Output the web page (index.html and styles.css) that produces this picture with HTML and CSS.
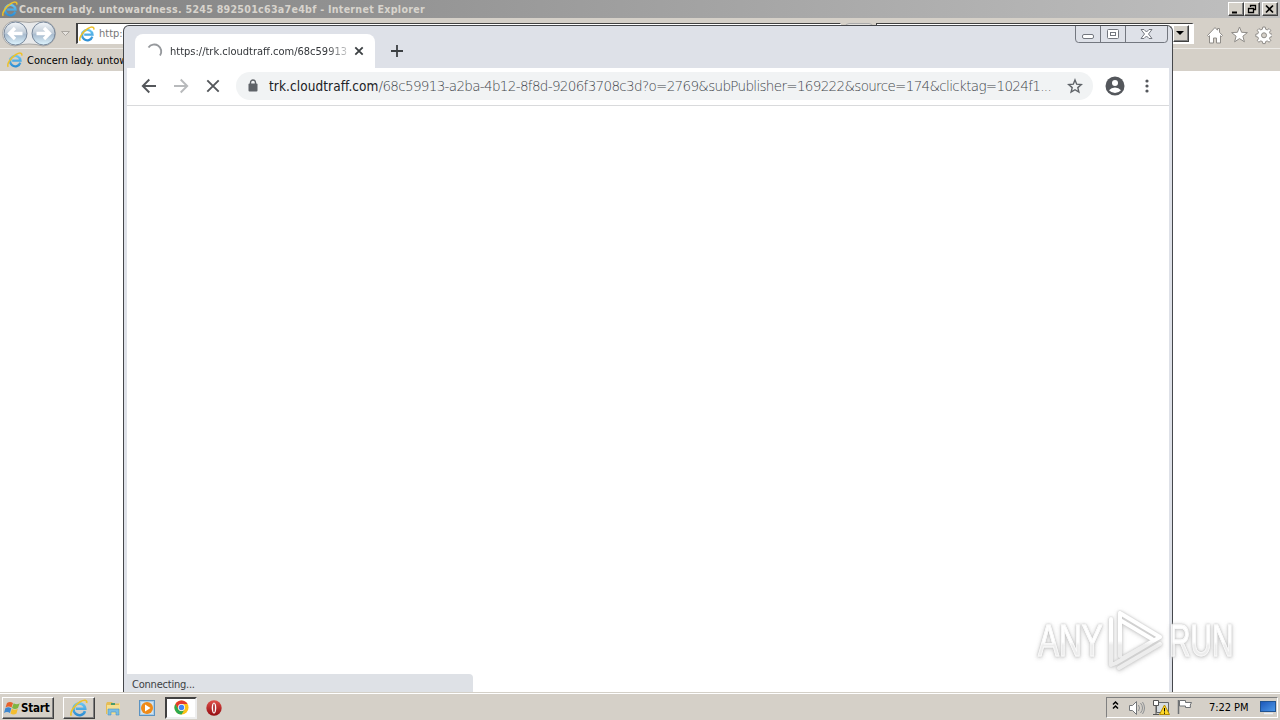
FILE: index.html
```html
<!DOCTYPE html>
<html lang="en">
<head>
<meta charset="utf-8">
<title>Desktop</title>
<link rel="stylesheet" href="styles.css">
</head>
<body>
<svg class="defs" width="0" height="0" aria-hidden="true">
  <defs>
    <linearGradient id="blue" x1="0" y1="0" x2="0" y2="1"><stop offset="0" stop-color="#67c4f2"/><stop offset="1" stop-color="#2f8fd4"/></linearGradient>
    <linearGradient id="orb" x1="0" y1="0" x2="0" y2="1"><stop offset="0" stop-color="#f4f7fa"/><stop offset=".45" stop-color="#c3ced9"/><stop offset=".55" stop-color="#a9bccf"/><stop offset="1" stop-color="#dff5ff"/></linearGradient>
    <linearGradient id="screen" x1="0" y1="0" x2="1" y2="1"><stop offset="0" stop-color="#1b55b8"/><stop offset="1" stop-color="#4f9bea"/></linearGradient>
    <linearGradient id="red" x1="0" y1="0" x2="0" y2="1"><stop offset="0" stop-color="#e0504a"/><stop offset="1" stop-color="#930b10"/></linearGradient>
    <linearGradient id="mark" gradientUnits="userSpaceOnUse" x1="0" y1="0" x2="0" y2="66"><stop offset=".5" stop-color="#fff"/><stop offset=".56" stop-color="#ececec"/></linearGradient>
    <symbol id="ie" viewBox="0 0 16 16">
      <path d="M13.300 10.700A5.200 5.200 0 1 1 13.500 8.600H5.200" fill="none" stroke="url(#blue)" stroke-width="2.300"/>
      <path d="M1.200 14.800C-.6 12 4 5.500 9 2.500C12.500.4 15.600.6 14.700 3.600" fill="none" stroke="#edc12b" stroke-width="1.500"/>
    </symbol>
  </defs>
</svg>
<div class="desktop">
  <section class="ie">
    <header class="ie-title">
      <svg class="ic16" viewBox="0 0 16 16"><use href="#ie"/></svg>
      <span class="ie-caption">Concern lady. untowardness. 5245 892501c63a7e4bf - Internet Explorer</span>
      <div class="ie-controls">
        <span class="btn"><svg width="14" height="12"><path d="M3 9.500h5" stroke="#000" stroke-width="2"/></svg></span>
        <span class="btn"><svg width="14" height="12"><path d="M5.500 4V2.500h5v4H9M5 2.500h6M3.500 5.500h5v4h-5zM3 5.500h6" fill="none" stroke="#000" stroke-width="1.300"/></svg></span>
        <span class="btn last"><svg width="14" height="12"><path d="M3 2.500l7 7M10 2.500l-7 7" stroke="#000" stroke-width="1.700"/></svg></span>
      </div>
    </header>
    <div class="ie-nav">
      <svg class="orbs" width="72" height="28" viewBox="0 0 72 28">
        <path d="M15 2Q29 5 43 2A12.500 12.500 0 0 1 43 27Q29 23 15 27A12.500 12.500 0 0 1 15 2Z" fill="#e8e9ea" stroke="#aaa9a7"/>
        <circle cx="15.500" cy="14.500" r="11.500" fill="url(#orb)" stroke="#77879a"/>
        <circle cx="43.500" cy="14.500" r="11.500" fill="url(#orb)" stroke="#77879a"/>
        <path d="M22.500 14.500H9.500M15 9l-5.500 5.500 5.500 5.500M36.500 14.500h13M44 9l5.500 5.500-5.500 5.500" fill="none" stroke="#fff" stroke-width="3.300"/>
        <path d="M61.500 12.500h8l-4 4z" fill="#e6e3df" stroke="#aaa6a0"/>
      </svg>
      <div class="ie-address"><svg class="ic16" viewBox="0 0 16 16"><use href="#ie"/></svg><span>http:</span></div>
      <span class="gap-chip"></span>
      <div class="ie-search"><span class="drop"><svg width="14" height="15"><path d="M2 5h8l-4 4z"/></svg></span></div>
      <svg class="ie-tools" width="66" height="20" viewBox="0 0 66 20" fill="#fff" stroke="#8f8c88" stroke-width="1">
        <path d="M1.500 10.500L9 2.500l2.500 2.700V3.500h2v3.800l3 3.200-1 1-1-.8V18h-4v-5h-3v5h-4v-7.300l-1 .8z"/>
        <path d="M33.500 2l2.100 5.300 5.800.3-4.500 3.600 1.500 5.600-4.900-3.200-4.900 3.200 1.500-5.600-4.500-3.600 5.800-.3z"/>
        <path d="M56.800 2h2.400l.4 2.200 1.600.7 1.900-1.300 1.700 1.700-1.300 1.900.7 1.600 2 .4v2.400l-2 .4-.7 1.600 1.300 1.900-1.700 1.700-1.900-1.300-1.600.7-.4 2h-2.400l-.4-2-1.600-.7-1.900 1.300-1.700-1.700 1.300-1.900-.7-1.600-2-.4V9.200l2-.4.7-1.600-1.300-1.900 1.700-1.700 1.900 1.300 1.600-.7z"/>
        <circle cx="58" cy="10.300" r="2.500" fill="#d5d0c8"/>
      </svg>
    </div>
    <div class="ie-tabs"><svg class="ic16" viewBox="0 0 16 16"><use href="#ie"/></svg><span>Concern lady. untowardness</span></div>
  </section>

  <section class="chrome">
    <div class="caption-buttons">
      <svg width="93" height="17" viewBox="0 0 93 17" fill="none" stroke="#73777f">
        <path d="M.5 0v13q0 3.500 3 3.500h86q3 0 3-3.500V0M25.500 0v16M50.500 0v16"/>
        <rect x="7.500" y="8.500" width="11" height="4" rx="1.500" fill="#fff"/>
        <rect x="32.500" y="3.500" width="11" height="9" rx="1" fill="#fff"/><rect x="35.500" y="6.500" width="5" height="3"/>
        <path d="M66 3.500h3l2.500 2.500L74 3.500h3L73.500 8l3.500 4.500h-3L71.500 10 69 12.500h-3L69.500 8z" fill="#fff"/>
      </svg>
    </div>
    <div class="tabstrip">
      <div class="tab">
        <svg class="spinner" width="16" height="16" viewBox="0 0 16 16"><path d="M1.500 4.500A6.900 6.900 0 0 1 13 12.500" fill="none" stroke="#96999d" stroke-width="1.900"/></svg>
        <span class="tab-title">https://trk.cloudtraff.com/68c59913</span>
        <svg class="tab-close" width="10" height="10" viewBox="0 0 10 10"><path d="M1.300 1.300l7.400 7.400M8.700 1.300L1.300 8.700" stroke="#3c4043" stroke-width="1.800"/></svg>
      </div>
      <svg class="plus" width="14" height="14" viewBox="0 0 14 14"><path d="M7 1v12M1 7h12" stroke="#3c4043" stroke-width="1.800"/></svg>
    </div>
    <div class="toolbar">
      <svg class="nav" width="92" height="18" viewBox="0 0 92 18" fill="none" stroke-width="1.900">
        <path d="M15 9H2M8.300 2.500L1.800 9l6.500 6.500" stroke="#54575b"/>
        <path d="M33 9h13M39.700 2.500L46.200 9l-6.500 6.500" stroke="#b8babc"/>
        <path d="M66.300 3.300l11.400 11.400M77.700 3.300L66.300 14.700" stroke="#54575b"/>
      </svg>
      <div class="omnibox">
        <svg class="lock" width="10" height="13" viewBox="0 0 10 13"><path d="M2.500 5V3.500a2.500 2.500 0 0 1 5 0V5" fill="none" stroke="#5f6368" stroke-width="1.400"/><rect x=".5" y="4.500" width="9" height="8" rx="1" fill="#5f6368"/></svg>
        <span class="url"><span class="host">trk.cloudtraff.com</span><span class="path">/68c59913-a2ba-4b12-8f8d-9206f3708c3d?o=2769&amp;subPublisher=169222&amp;source=174&amp;clicktag=1024f1...</span></span>
        <svg class="star" width="16" height="16" viewBox="0 0 16 16"><path d="M8 1.900l1.700 4.300 4.600.4-3.500 3 1.100 4.500L8 11.700l-3.900 2.400 1.100-4.500-3.500-3 4.600-.4z" fill="none" stroke="#5f6368" stroke-width="1.400"/></svg>
      </div>
      <svg class="avatar" width="20" height="20" viewBox="0 0 20 20"><circle cx="10" cy="10" r="9.500" fill="#54575c"/><circle cx="10" cy="7" r="3" fill="#fff"/><path d="M4 14.300q2.300-2.800 6-2.800t6 2.800q-2.300 2.700-6 2.700t-6-2.700z" fill="#fff"/></svg>
      <svg class="dots" width="4" height="14" viewBox="0 0 4 14" fill="#54575c"><circle cx="2" cy="2" r="1.600"/><circle cx="2" cy="7" r="1.600"/><circle cx="2" cy="12" r="1.600"/></svg>
    </div>
    <main class="page"><div class="status">Connecting...</div></main>
  </section>

  <div class="watermark">
    <span class="any">ANY</span>
    <svg width="60" height="66" viewBox="0 0 60 66" fill="none" stroke="url(#mark)" stroke-width="4" stroke-linejoin="round" stroke-linecap="round">
      <path d="M15 5v43M15 5L55 29 18 50M15 12L47 31M6 11v46l5-2M14 60l41-24M11 55l34-20"/>
    </svg>
    <span class="run">RUN</span>
  </div>

  <footer class="taskbar">
    <div class="start"><svg width="17" height="16" viewBox="0 0 17 16"><path d="M3 3q3-2 6 0L7.500 7.500q-3-2-6 0z" fill="#e7622c"/><path d="M9.700 3.300q3 2 6 0L14 8q-3 2-6 0z" fill="#7fb541"/><path d="M1.300 8.300q3-2 6 0L6 13q-3-2-6 0z" fill="#3d87d0"/><path d="M7.800 8.800q3 2 6 0L12.500 13.500q-3 2-6 0z" fill="#f4bd2f"/></svg><span>Start</span></div>
    <div class="task raised"><svg class="ic18" viewBox="0 0 16 16"><use href="#ie"/></svg></div>
    <div class="task"><svg width="18" height="18" viewBox="0 0 18 18"><path d="M2 5l1-2h5l1 1.500h6V15H2z" fill="#e5bd57"/><path d="M3 6h12V4l1-.5V15H3z" fill="#f5df91"/><path d="M7 4h4v2H7z" fill="#4a9a6c"/><path d="M4 16v-6h11v6h-3v-3H7v3z" fill="#79bde4" stroke="#4f94bf" stroke-width=".6"/></svg></div>
    <div class="task"><svg width="16" height="16" viewBox="0 0 16 16"><rect x=".5" y=".5" width="15" height="15" fill="#a9cbe5" stroke="#5b93c2"/><rect x="2" y="2" width="12" height="12" fill="#cfe3f1"/><circle cx="8" cy="8" r="6" fill="#ef8a17"/><path d="M6 4.500L11.500 8 6 11.500z" fill="#fff"/></svg></div>
    <div class="task pressed"><svg width="15" height="15" viewBox="0 0 16 16"><circle cx="8" cy="8" r="7.500" fill="#fbc116"/><path d="M1.500 4.250A7.500 7.500 0 0 1 14.500 4.250H8A3.800 3.800 0 0 0 4.700 10z" fill="#e33b2e"/><path d="M1.500 4.250A7.500 7.500 0 0 0 8 15.500L11.300 10A3.800 3.800 0 0 1 4.700 10z" fill="#2da94f"/><circle cx="8" cy="8" r="3.700" fill="#fff"/><circle cx="8" cy="8" r="2.900" fill="#4285f4"/></svg></div>
    <div class="task opera"><svg width="16" height="16" viewBox="0 0 16 16"><circle cx="8" cy="8" r="7.700" fill="url(#red)"/><ellipse cx="8" cy="8" rx="2.300" ry="5.600" fill="#fff"/><ellipse cx="8" cy="8" rx=".8" ry="4.600" fill="#a51218"/></svg></div>
    <div class="tray">
      <svg width="82" height="18" viewBox="0 0 82 18" fill="none">
        <path d="M2 5.500l2.500-2.500 2.500 2.500M2 9.500l2.500-2.500 2.500 2.500" stroke="#000" stroke-width="1.500"/>
        <path d="M18.500 6.500h3l4-4v13l-4-4h-3z" fill="#fff" stroke="#74777a"/>
        <path d="M27.500 6q2 3 0 6M29.500 4q4 5 0 10M31.500 3q4 6 0 12" stroke="#8e9194"/>
        <path d="M45.500 3.500h12v10h-12z" fill="#d7dde1" stroke="#63676a"/><path d="M42.500 1.500h5v5h-5zM45 7v8M42 15.500h6" fill="#fff" stroke="#555"/>
        <path d="M53.500 6l5 9.500h-10z" fill="#ffd928" stroke="#b48a00"/><path d="M53.500 9v3.500M53.500 13.500v1.300" stroke="#000"/>
        <path d="M67.500 1v14" stroke="#6f7275" stroke-width="1.500"/><path d="M68.500 1.500h6v2h6q-2 2.500-1 5h-5v-1.500h-6z" fill="#fff" stroke="#6f7275"/>
      </svg>
      <span class="clock">7:22 PM</span>
      <svg class="monitor" width="16" height="15" viewBox="0 0 16 15"><rect x=".5" y="1.500" width="15" height="10" fill="url(#screen)" stroke="#215391"/><path d="M4 13.500h9" stroke="#e9eff6" stroke-width="1.500"/></svg>
    </div>
  </footer>
</div>
</body>
</html>
```

FILE: styles.css
```css
* { box-sizing: border-box; }
body { margin: 0; width: 1280px; height: 720px; overflow: hidden; background: #fff; }
svg { display: block; flex: none; }
.defs { position: absolute; }
.desktop { position: relative; width: 1280px; height: 720px; overflow: hidden; font: 10.6px "DejaVu Sans Condensed", "DejaVu Sans", sans-serif; font-stretch: condensed; color: #000; white-space: nowrap; }
.ic16 { width: 16px; height: 16px; }
.ic18 { width: 18px; height: 18px; }

.ie { position: absolute; inset: 0 0 28px 0; background: #fff; display: flex; flex-direction: column; }
.ie-title { height: 18px; display: flex; align-items: center; padding: 0 2px; background: linear-gradient(90deg, #808080, #c0c0c0); color: #d8d4cd; font-weight: bold; }
.ie-caption { margin-left: 1px; letter-spacing: .27px; }
.ie-controls { margin-left: auto; display: flex; }
.btn { width: 16px; height: 14px; background: #d4d0c8; border: 1px solid; border-color: #fff #404040 #404040 #fff; box-shadow: inset -1px -1px #808080; }
.btn.last { margin-left: 2px; }
.ie-nav { height: 30px; background: #d5d0c8; display: flex; align-items: flex-start; padding-top: 1px; }
.ie-address { margin: 4px 0 0 4px; width: 765px; height: 21px; background: #fff; border: 1px solid #404040; border-left-width: 2px; border-right-color: #fff; border-bottom-color: #fff; display: flex; align-items: center; padding-left: 1px; gap: 4px; color: #777; font-size: 11px; }
.gap-chip { width: 28px; height: 18px; margin: 4px 3px 0 4px; background: #e3e1dd; border: 1px solid #aaa; border-radius: 4px; }
.ie-search { width: 318px; height: 21px; margin-top: 4px; background: #fff; border: 1px solid #404040; border-right: 2px solid #fff; border-bottom-color: #fff; display: flex; justify-content: flex-end; padding: 1px 3px 0 0; }
.drop { width: 16px; height: 17px; background: #d4d0c8; border: 1px solid; border-color: #fff #404040 #404040 #fff; box-shadow: inset -1px -1px #808080; }
.ie-tools { margin: 6px 0 0 12px; }
.ie-tabs { height: 23px; background: #d5d0c8; border-top: 1px solid #eceae6; display: flex; align-items: center; padding-left: 7px; gap: 4px; font-size: 11px; }

.chrome { position: absolute; left: 123px; top: 25px; width: 1050px; height: 667px; background: #dee1e8; border: solid #45474b; border-width: 1px 1px 0 1px; border-radius: 6px 6px 0 0; padding: 0 3px; display: flex; flex-direction: column; }
.caption-buttons { position: absolute; right: 4px; top: 0; }
.tabstrip { height: 42px; display: flex; align-items: flex-start; padding: 8px 0 0 8px; }
.tab { width: 240px; height: 34px; background: #fff; border-radius: 8px 8px 0 0; display: flex; align-items: center; padding-left: 12px; }
.tab-title { width: 177px; margin-left: 7px; overflow: hidden; font-size: 11px; letter-spacing: 0; color: #33363a; -webkit-mask-image: linear-gradient(90deg, #000 88%, transparent 104%); mask-image: linear-gradient(90deg, #000 88%, transparent 104%); }
.tab-close { margin-left: 7px; }
.plus { margin: 10px 0 0 15px; }
.toolbar { height: 38px; background: #fff; border-bottom: 1px solid #d9dadc; display: flex; align-items: center; padding: 0 0 2px 14px; }
.omnibox { width: 857px; height: 28px; margin-left: 3px; background: #f1f3f4; border-radius: 14px; display: flex; align-items: center; padding: 0 10px 0 12px; }
.url { margin-left: 11px; width: 786px; font-size: 13.500px; font-weight: 200; font-family: "DejaVu Sans Light", "DejaVu Sans", sans-serif; font-stretch: normal; letter-spacing: -.67px; color: #42464b; }
.host { color: #202124; font-family: "DejaVu Sans Condensed", "DejaVu Sans", sans-serif; font-stretch: condensed; font-size: 13.500px; letter-spacing: .08px; font-weight: 400; }
.star { margin-left: auto; }
.avatar { margin-left: 12px; }
.dots { margin-left: 20px; }
.page { flex: 1; background: #fff; display: flex; align-items: flex-end; }
.status { width: 346px; height: 18px; padding: 4px 0 0 5px; background: #dee1e6; border-radius: 0 4px 0 0; font-size: 11px; line-height: 13px; letter-spacing: -.22px; color: #3c4043; }

.watermark { position: absolute; left: 1038px; top: 608px; width: 200px; height: 66px; display: flex; align-items: center; font: 45px "Liberation Sans", sans-serif; filter: drop-shadow(0 0 1px #bcbcbc) drop-shadow(0 1px 2px #cecece); opacity: .9; }
.watermark svg { margin: 0 4px 0 3px; }
.any, .run { display: block; color: transparent; background: linear-gradient(#fff 52%, #ececec 58%) text; -webkit-background-clip: text; background-clip: text; -webkit-text-stroke: 1px #fafafa; }
.any { width: 92px; margin-right: -28px; transform: scaleX(.7); transform-origin: 0 50%; }
.run { width: 98px; margin-right: -34px; transform: scaleX(.66); transform-origin: 0 50%; }

.taskbar { position: absolute; left: 0; right: 0; bottom: 0; height: 28px; background: #d5d0c8; border-top: 1px solid #d4d0c8; box-shadow: inset 0 1px #fff; display: flex; align-items: center; padding: 2px 2px 0 2px; }
.start { width: 52px; height: 22px; display: flex; align-items: center; padding-left: 1px; border: 1px solid; border-color: #fff #404040 #404040 #fff; box-shadow: inset -1px -1px #808080; font-size: 11.500px; font-weight: bold; letter-spacing: -.2px; margin-right: 9px; }
.task { width: 32px; height: 22px; margin-right: 2px; display: flex; align-items: center; justify-content: center; }
.raised { border: 1px solid; border-color: #fff #404040 #404040 #fff; box-shadow: inset -1px -1px #808080; }
.pressed { background: #fff; border: 2px solid; border-color: #404040 #eee #eee #404040; }
.opera { margin-left: -1px; }
.tray { margin-left: auto; width: 172px; height: 21px; display: flex; align-items: center; padding-left: 4px; border: 1px solid; border-color: #808080 #fff #fff #808080; }
.clock { margin-left: 16px; width: 40px; font-size: 11px; letter-spacing: -.05px; }
.monitor { margin-left: 11px; }
```
